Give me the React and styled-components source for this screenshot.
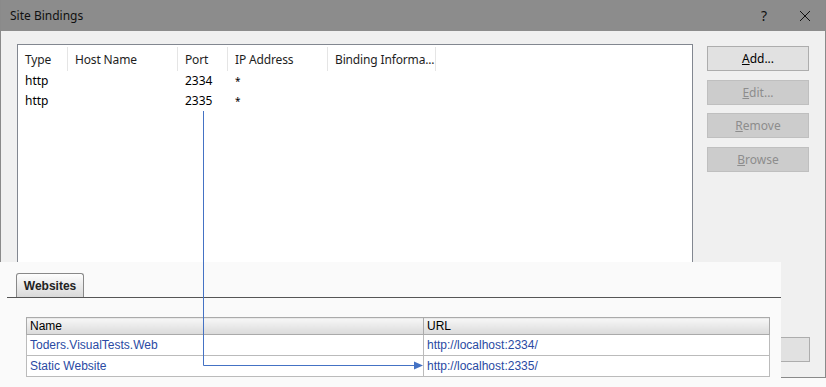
import React from "react";
import styled, { createGlobalStyle } from "styled-components";

const GlobalStyle = createGlobalStyle`
    html, body {
        margin: 0;
        padding: 0;
        background: #fafafa;
    }
    #root {
        position: relative;
        width: 826px;
        height: 387px;
        overflow: hidden;
    }
`;

const columns = [
    { title: "Type", width: 50 },
    { title: "Host Name", width: 110 },
    { title: "Port", width: 50 },
    { title: "IP Address", width: 100 },
    { title: "Binding Informa...", width: 108 },
];

const bindings = [
    ["http", "", "2334", "*", ""],
    ["http", "", "2335", "*", ""],
];

const sites = [
    { name: "Toders.VisualTests.Web", url: "http://localhost:2334/" },
    { name: "Static Website", url: "http://localhost:2335/" },
];

const App = () => {
    return (
        <>
            <GlobalStyle />
            <Window>
                <TitleBar>
                    <Title>Site Bindings</Title>
                    <TitleControls>
                        <HelpGlyph>?</HelpGlyph>
                        <svg width="12" height="12" viewBox="0 0 12 12">
                            <path d="M1 1 L11 11 M11 1 L1 11" stroke="#111" strokeWidth="1" fill="none" />
                        </svg>
                    </TitleControls>
                </TitleBar>
                <Body>
                    <Main>
                        <ListView>
                            <HeaderRow>
                                {columns.map((c) => (
                                    <HeaderCell key={c.title} $width={c.width}>{c.title}</HeaderCell>
                                ))}
                            </HeaderRow>
                            {bindings.map((row, i) => (
                                <ListRow key={i}>
                                    {row.map((v, j) => (
                                        <ListCell key={j} $width={columns[j].width} $small={v === "*"}>{v}</ListCell>
                                    ))}
                                </ListRow>
                            ))}
                        </ListView>
                        <ButtonColumn>
                            <Button><u>A</u>dd...</Button>
                            <Button disabled><u>E</u>dit...</Button>
                            <Button disabled><u>R</u>emove</Button>
                            <Button disabled><u>B</u>rowse</Button>
                        </ButtonColumn>
                    </Main>
                    <Footer>
                        <Button>Close</Button>
                    </Footer>
                </Body>
            </Window>

            <Overlay>
                <TabStrip>
                    <Tab>Websites</Tab>
                </TabStrip>
                <SiteTable>
                    <thead>
                        <tr>
                            <Th>Name</Th>
                            <Th>URL</Th>
                        </tr>
                    </thead>
                    <tbody>
                        {sites.map((s) => (
                            <tr key={s.name}>
                                <Td>{s.name}</Td>
                                <Td>{s.url}</Td>
                            </tr>
                        ))}
                    </tbody>
                </SiteTable>
            </Overlay>

            <Connector width="826" height="387" viewBox="0 0 826 387">
                <path d="M203.5 111 V365.5 H415" stroke="#4472c4" strokeWidth="1" fill="none" />
                <polygon points="414,361.5 423,365.5 414,369.5" fill="#4472c4" />
            </Connector>
        </>
    );
};

const Window = styled.div`
    display: flex;
    flex-direction: column;
    width: 826px;
    height: 378px;
    box-sizing: border-box;
    border: 1px solid #8a8a8a;
    border-top: none;
    background: #f0f0f0;
    font-family: "Noto Sans", "Open Sans", sans-serif;
    font-size: 12px;
    color: #000;
`;

const TitleBar = styled.div`
    display: flex;
    align-items: center;
    justify-content: space-between;
    height: 31px;
    flex-shrink: 0;
    background: #8c8c8c;
    padding: 0 14px 0 9px;
`;

const Title = styled.span`
    font-size: 12px;
    color: #111;
`;

const TitleControls = styled.div`
    display: flex;
    align-items: center;
    gap: 32px;
`;

const HelpGlyph = styled.span`
    font-size: 14px;
    color: #111;
`;

const Body = styled.div`
    display: flex;
    flex-direction: column;
    flex: 1;
    padding: 13px 15px 15px 16px;
`;

const Main = styled.div`
    display: flex;
    flex: 1;
    gap: 14px;
`;

const ListView = styled.div`
    width: 676px;
    box-sizing: border-box;
    border: 1px solid #828790;
    background: #fff;
`;

const HeaderRow = styled.div`
    display: flex;
    height: 26px;
    align-items: stretch;
`;

const HeaderCell = styled.div`
    display: flex;
    align-items: center;
    width: ${(p) => p.$width}px;
    box-sizing: border-box;
    padding: 0 0 0 7px;
    margin: 2px 0 0;
    border-right: 1px solid #e5e5e5;
    white-space: nowrap;
    letter-spacing: -0.15px;
    color: #1e1e1e;
`;

const ListRow = styled.div`
    display: flex;
    height: 20px;
    align-items: center;
`;

const ListCell = styled.div`
    width: ${(p) => p.$width}px;
    box-sizing: border-box;
    padding-left: 7px;
    white-space: nowrap;
    font-size: ${(p) => (p.$small ? "10px" : "12px")};
    line-height: 20px;
    align-self: ${(p) => (p.$small ? "flex-start" : "center")};
`;

const ButtonColumn = styled.div`
    display: flex;
    flex-direction: column;
    gap: 8.5px;
    padding-top: 2px;
`;

const Button = styled.button`
    width: 102px;
    height: 25px;
    box-sizing: border-box;
    padding: 0;
    border: 1px solid ${(p) => (p.disabled ? "#bfbfbf" : "#adadad")};
    background: ${(p) => (p.disabled ? "#cccccc" : "#e1e1e1")};
    color: ${(p) => (p.disabled ? "#8d8d8d" : "#000")};
    font-family: inherit;
    font-size: 12px;

    u {
        text-decoration-thickness: 1px;
    }
`;

const Footer = styled.div`
    display: flex;
    justify-content: flex-end;
    margin-top: 12px;
`;

const Overlay = styled.div`
    position: absolute;
    left: 0;
    top: 262px;
    width: 781px;
    height: 125px;
    box-sizing: border-box;
    padding: 11px 0 0 7px;
    background: #fafafa;
    font-family: "Liberation Sans", Arial, sans-serif;
    font-size: 12px;
`;

const TabStrip = styled.div`
    display: flex;
    border-bottom: 1px solid #555;
    padding-left: 9px;
`;

const Tab = styled.div`
    height: 24px;
    width: 68px;
    box-sizing: border-box;
    display: flex;
    align-items: center;
    justify-content: center;
    border: 1px solid #888;
    border-bottom: none;
    border-radius: 3px 3px 0 0;
    background: linear-gradient(#fdfdfd, #d9d9d9);
    font-weight: bold;
    color: #222;
`;

const SiteTable = styled.table`
    margin: 19px 0 0 19px;
    width: 744px;
    border-collapse: collapse;
    border: 1px solid #aaa;
    background: #fff;
`;

const Th = styled.th`
    height: 16px;
    padding: 0 3px;
    text-align: left;
    font-weight: normal;
    color: #000;
    border: 1px solid #aaa;
    background: linear-gradient(#f7f7f7, #dadada);

    &:first-child {
        width: 390px;
    }
`;

const Td = styled.td`
    height: 20px;
    padding: 0 3px;
    border: 1px solid #bbb;
    color: #2a4aa3;
`;

const Connector = styled.svg`
    position: absolute;
    left: 0;
    top: 0;
    pointer-events: none;
`;

export default App;
